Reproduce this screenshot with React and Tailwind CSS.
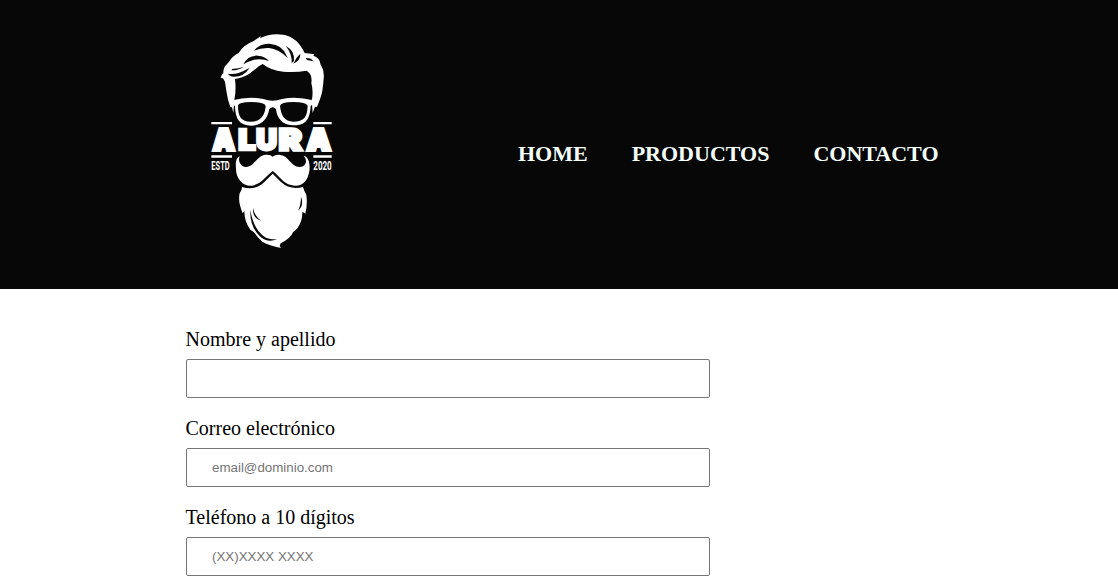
import React from "react";

function Logo() {
  return (
    <svg className="block h-[230px] w-[145px]" viewBox="0 0 435 690" role="img" aria-label="Alura">
      <g fill="#fff">
        {/* hair and sideburns */}
        <path d="M100 264 L96 247 L91 246 Q83 225 80 203 L75 170 L69 160 L62 159 L66 148 L70 145 Q69 129 79 119 L86 112 Q96 94 116 84 Q130 60 160 49 L183 33 L180 40 Q212 23 250 29 Q292 36 314 84 L343 88 L340 92 Q359 98 361 116 Q374 137 371 160 Q369 198 361 220 L351 246 L345 245 L338 264 L335 226 Q341 202 334 174 Q338 148 320 137 Q286 143 250 140 Q212 136 188 117 C164 128 152 155 105 162 Q109 198 103 225 Z" />
        {/* glasses */}
        <path fillRule="evenodd" d="M98 226 Q145 213 190 222 Q218 233 246 222 Q291 213 339 226 L339 238 L332 243 C330 279 320 303 278 301 C245 300 230 276 228 252 Q218 242 208 252 C202 281 188 301 154 302 C117 302 106 280 105 243 L98 238 Z M114 242 C114 276 125 291 155 290 C185 289 195 268 197 243 Q193 231 154 231 Q115 231 114 242 Z M240 243 C243 271 253 289 280 290 C312 290 322 275 323 242 Q318 231 280 231 Q242 231 240 243 Z" />
        <path d="M34 291h62v7H34zM340 291h55v7h-55zM34 391h62v7H34zM340 391h55v7h-55z" />
        {/* moustache */}
        <path d="M120 394 C112 403 121 426 137 426 C163 427 169 391 198 389 Q212 388 218 395 Q225 388 238 389 C267 391 270 424 299 426 C318 426 324 405 311 393 C326 394 331 418 328 438 C322 477 297 488 273 480 C249 475 239 454 218 438 C197 454 185 476 157 482 C129 485 108 461 108 431 C106 413 109 397 120 394 Z" />
        {/* beard */}
        <path d="M126 486 Q166 498 193 471 L218 446 L243 471 Q270 496 309 486 Q312 498 319 509 Q323 537 316 566 L307 560 Q308 590 291 611 L279 622 Q272 640 242 655 L239 663 L243 669 Q208 662 187 650 Q173 639 162 622 L151 614 Q133 590 133 558 L128 565 Q113 530 119 505 Q126 497 126 486 Z" />
      </g>
      <g fill="#070707">
        <path d="M162 77 Q179 55 208 56 Q249 59 260 93 L264 100 Q235 71 207 69 Q182 68 162 77 Z" />
        <path d="M257 63 Q285 77 282 108 L275 115 Q277 86 257 63 Z" />
        <path d="M301 86 Q302 106 280 116 Q286 99 301 86 Z" />
        <path d="M317 99 Q333 98 341 109 L321 105 Z" />
        <path d="M130 118 Q143 90 174 92 Q196 94 207 108 Q186 100 162 104 Q145 109 130 118 Z" />
        <path d="M95 136 Q111 137 132 126 Q116 131 96 132 Z M84 146 Q108 152 149 128 Q132 155 102 155 Q88 154 84 146 Z" />
        <path d="M151 556 Q161 613 193 635 Q207 644 231 643 Q203 654 181 635 Q149 606 151 556 Z" />
        <path d="M159 549 Q163 573 184 587 Q157 580 159 549 Z M303 515 Q313 541 294 557 Q303 540 303 515 Z" />
      </g>
      <g fill="#fff" stroke="#fff" fontFamily="Inter, 'Liberation Sans', sans-serif" fontWeight="900" fontSize="86" strokeWidth="12">
        <text x="40" y="374" textLength="63" lengthAdjust="spacingAndGlyphs">A</text>
        <text x="115" y="374" textLength="52" lengthAdjust="spacingAndGlyphs" strokeWidth="8">L</text>
        <text x="169" y="374" textLength="62" lengthAdjust="spacingAndGlyphs" strokeWidth="9">U</text>
        <text x="237" y="374" textLength="68" lengthAdjust="spacingAndGlyphs" strokeWidth="10">R</text>
        <text x="322" y="374" textLength="69" lengthAdjust="spacingAndGlyphs">A</text>
      </g>
      <g fill="#fff" fontFamily="Roboto, 'Liberation Sans', sans-serif" fontWeight="700" fontSize="37">
        <text x="34" y="436" textLength="55" lengthAdjust="spacingAndGlyphs">ESTD</text>
        <text x="340" y="436" textLength="55" lengthAdjust="spacingAndGlyphs">2020</text>
      </g>
    </svg>
  );
}

const fields = [
  { id: "nombre", label: "Nombre y apellido", type: "text", placeholder: "" },
  { id: "correo", label: "Correo electrónico", type: "email", placeholder: "email@dominio.com" },
  { id: "telefono", label: "Teléfono a 10 dígitos", type: "tel", placeholder: "(XX)XXXX XXXX" },
];

export default function App() {
  return (
    <div className="h-[579px] overflow-hidden bg-white font-['Liberation_Serif',serif] text-black">
      <header className="flex h-[289px] items-start bg-[#070707] pl-[200px] pt-[25px]">
        <Logo />
        <nav className="ml-[173px] mt-[116px]">
          <ul className="flex gap-11 text-[22px] font-bold leading-[25px] text-[#f5fffa]">
            <li><a href="#home">HOME</a></li>
            <li><a href="#productos">PRODUCTOS</a></li>
            <li><a href="#contacto">CONTACTO</a></li>
          </ul>
        </nav>
      </header>
      <main className="pl-[186px] pt-[39px]">
        <form className="flex w-[524px] flex-col gap-[19px]">
          {fields.map((f) => (
            <div key={f.id} className="flex flex-col gap-2">
              <label htmlFor={f.id} className="-ml-[0.5px] text-[20px] leading-[23px]">{f.label}</label>
              <input
                id={f.id}
                type={f.type}
                placeholder={f.placeholder}
                className="h-[39px] rounded-[2px] border border-[#767676] bg-white px-[25px] font-['Liberation_Sans',sans-serif] text-[13.333px] placeholder:text-[#757575]"
              />
            </div>
          ))}
        </form>
      </main>
    </div>
  );
}
